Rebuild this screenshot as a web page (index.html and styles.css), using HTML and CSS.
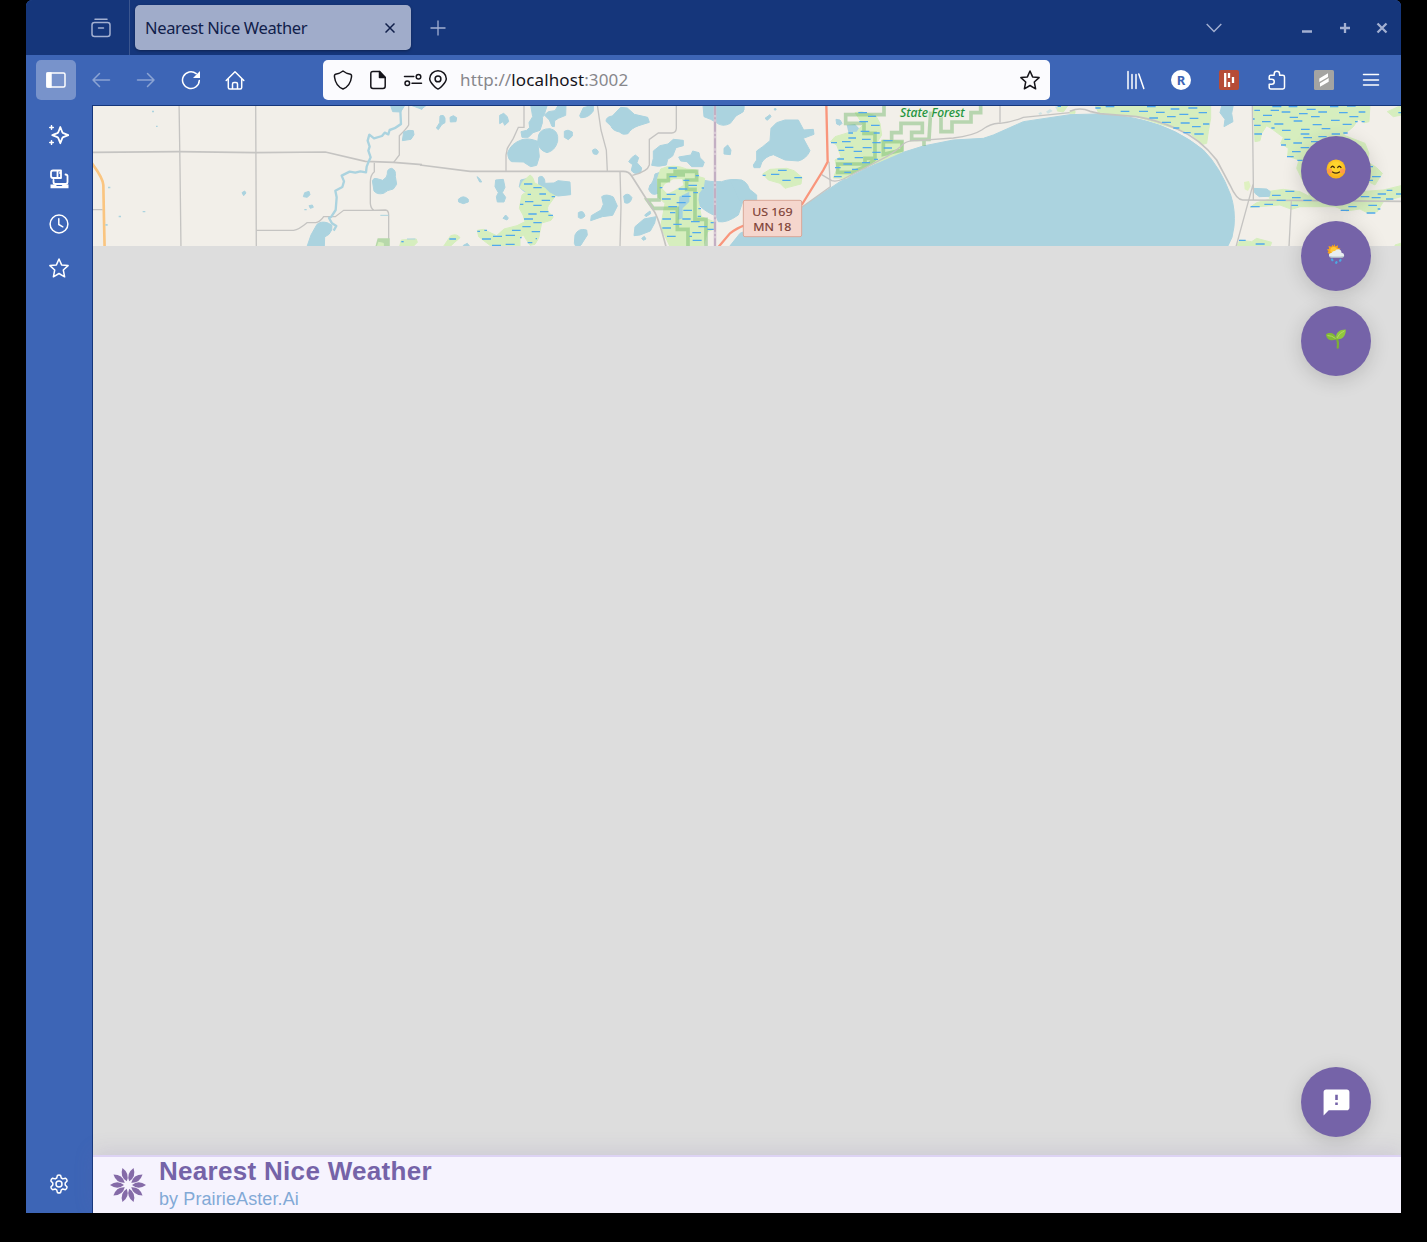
FILE: index.html
```html
<!DOCTYPE html>
<html lang="en">
<head>
<meta charset="utf-8">
<title>Nearest Nice Weather</title>
<link rel="stylesheet" href="styles.css">
</head>
<body>
<div class="window">
  <header class="titlebar">
    <div class="recent"><svg class="icon" viewBox="0 0 20 20"><path d="M4 1.2h12"/><rect x="1" y="4.5" width="18" height="14" rx="2.5"/><path d="M7.5 10h5"/></svg></div>
    <div class="tab"><span class="tab-title">Nearest Nice Weather</span><svg class="tab-close" viewBox="0 0 10 10"><path d="M.5.5l9 9M9.500.5l-9 9"/></svg></div>
    <svg class="new-tab" viewBox="0 0 16 16"><path d="M8 .5v15M.5 8h15"/></svg>
    <div class="window-controls">
      <svg class="chevron" viewBox="0 0 16 10"><path d="M.7 1L8 8.500 15.300 1"/></svg>
      <svg class="control" viewBox="0 0 12 12"><path d="M1 9.500h10"/></svg>
      <svg class="control" viewBox="0 0 12 12"><path d="M1 6h10M6 1v10"/></svg>
      <svg class="control" viewBox="0 0 12 12"><path d="M1.500 1.500l9 9M10.500 1.500l-9 9"/></svg>
    </div>
  </header>

  <nav class="toolbar">
    <div class="tool tool-active"><svg class="icon" viewBox="0 0 20 20"><rect x="1" y="3" width="18" height="14" rx="1.500"/><path fill="currentColor" d="M1 3h4v14H1z"/></svg></div>
    <div class="tool dim"><svg class="icon" viewBox="0 0 20 20"><path d="M18.500 10H2M8.500 3.500L2 10l6.500 6.500"/></svg></div>
    <div class="tool dim"><svg class="icon" viewBox="0 0 20 20"><path d="M1.500 10H18M11.500 3.500L18 10l-6.500 6.500"/></svg></div>
    <div class="tool"><svg class="icon" viewBox="0 0 20 20"><path d="M18.300 10.500A8.400 8.400 0 1 1 15.200 3.600"/><path fill="currentColor" stroke="none" d="M19 1v7h-7z"/></svg></div>
    <div class="tool home"><svg class="icon" viewBox="0 0 20 20"><path d="M1.200 10.500L10 1.800l8.800 8.700M3.300 8.800v8.700q0 1.500 1.500 1.500h10.400q1.500 0 1.500-1.500V8.800M7.500 19v-5q0-1.500 1.500-1.500h2q1.500 0 1.500 1.500v5"/></svg></div>
    <div class="urlbar">
      <svg class="icon" viewBox="0 0 20 20"><path d="M10 1C7.800 2.800 4.800 3.800 2.500 4.200 1.300 4.500 1.300 5.500 1.500 7c.7 5.500 4 10.200 8.500 12 4.500-1.800 7.800-6.500 8.500-12 .2-1.500.2-2.500-1-2.800C15.200 3.800 12.200 2.800 10 1z"/></svg>
      <svg class="icon doc" viewBox="0 0 20 20"><path d="M11.500 1.500H5Q2.800 1.500 2.800 3.700v12.600q0 2.200 2.200 2.200h10q2.200 0 2.200-2.200V7.500z"/><path fill="currentColor" d="M11.500 1.500v6h5.700z"/></svg>
      <svg class="icon perms" viewBox="0 0 20 20"><path d="M1.500 6.500h9.300M9 13.300h9.500"/><circle cx="15.500" cy="6.800" r="2.300"/><circle cx="4.300" cy="13.200" r="2.300"/></svg>
      <svg class="icon pin" viewBox="0 0 20 20"><path d="M10 19c-.9 0-8.300-6-8.300-10.200a8.300 8 0 0 1 16.600 0C18.300 13 10.900 19 10 19z"/><circle cx="10" cy="8.900" r="2.900"/></svg>
      <span class="url">http://<b>localhost</b>:3002</span>
      <svg class="icon star" viewBox="0 0 20 20"><path d="M10 1l2.600 5.900 6.500.7-4.800 4.400 1.300 6.800L10 15.500l-5.600 3.300L5.700 12 .9 7.600l6.500-.7z"/></svg>
    </div>
    <div class="tools-right">
      <div class="tool"><svg class="icon" viewBox="0 0 20 20"><path d="M2 1.500v17.200M6 4.500v14M10 4.500v14M12.800 4l5 14.500"/></svg></div>
      <div class="tool"><span class="avatar">R</span></div>
      <div class="tool wide"><svg class="icon" viewBox="0 0 20 20"><rect fill="#b64b36" stroke="none" width="20" height="20" rx="2"/><path stroke="#fff" stroke-width="2.300" stroke-linecap="butt" d="M6.200 3v14M10 3v5M10 12v5M14 7v6"/></svg></div>
      <div class="tool wide"><svg class="icon" viewBox="0 0 20 20"><path d="M2.200 9V6.700q0-1.500 1.500-1.500h3.500V4a2.700 2.700 0 0 1 5.400 0v1.200h3.200q1.700 0 1.700 1.700v10.400q0 1.700-1.700 1.700H3.900q-1.700 0-1.700-1.700v-3h2.500a2.500 2.500 0 0 0 0-5.100H2.200"/></svg></div>
      <div class="tool wide"><svg class="icon" viewBox="0 0 20 20"><rect fill="#a4a4a2" stroke="none" width="20" height="20" rx="1.500"/><path fill="#fff" stroke="none" d="M5.300 8.500L14 3.300v3.600L5.300 12zM6 13.300l8.700-5.200v3.600L6 16.800z"/></svg></div>
      <div class="tool menu"><svg class="icon" viewBox="0 0 20 20"><path d="M2.500 4.500h15M2.500 10h15M2.500 15h15"/></svg></div>
    </div>
  </nav>

  <div class="body">
    <aside class="sidebar">
      <svg class="icon" viewBox="0 0 20 20"><path stroke-width="1.800" d="M11.300 2l2 5.200q.3.700 1 1l5 2-5 2q-.7.300-1 1l-2 5-2-5q-.3-.7-1-1l-5-2 5-2q.7-.3 1-1z"/><path d="M2.500.7v3.600M.7 2.500h3.600M2.500 15.700v3.600M.7 17.500h3.600"/></svg>
      <svg class="icon" viewBox="0 0 20 20"><path stroke-width="1.800" d="M4 1.500h8V9H4q-2 0-2-2V3.500q0-2 2-2zM8.500 2v7M11 4h1M4.500 11v2q0 2 2 2h10q2 0 2-2V7q0-1.500-2-1.500"/><path fill="currentColor" stroke="none" d="M1.500 15.500h5l1.500 1.500h4.500l1.500-1.500h5.500v3.700h-18z"/></svg>
      <svg class="icon" viewBox="0 0 20 20"><circle cx="10" cy="10" r="8.900"/><path d="M9.800 4.800v5.700l4 2.300"/></svg>
      <svg class="icon" viewBox="0 0 20 20"><path d="M10 1l2.600 5.900 6.500.7-4.800 4.400 1.300 6.800L10 15.500l-5.600 3.300L5.700 12 .9 7.600l6.500-.7z"/></svg>
      <svg class="icon settings" viewBox="0 0 20 20"><path d="M8.400 1.500q1.600-1 3.200 0l.7 2.500 1.500.9 2.600-.7q1.500.8 1.700 2.700l-1.900 2v2l1.900 2.100q-.2 1.900-1.700 2.700l-2.600-.7-1.500.9-.7 2.600q-1.600 1-3.200 0l-.7-2.600-1.500-.9-2.600.7q-1.500-.8-1.700-2.700l1.900-2.100v-2l-1.900-2q.2-1.900 1.700-2.700l2.600.7 1.500-.9z"/><circle cx="10" cy="10" r="3"/></svg>
    </aside>

    <main class="page">
      <svg class="map" viewBox="93 106 1308 140">
        <!-- farmland in the west, river and orange highway -->
        <g transform="translate(92 100) scale(.33333)">
          <g class="road"><path d="M0 157L260 155 490 158 700 156 820 184 905 187 990 194" stroke-width="5"/><path d="M261 0L264 200 267 450M491 0L493 450" stroke-width="4"/><path d="M0 329H32M493 391H605Q620 389 645 368H672Q685 365 695 350H730L755 331H838L880 330Q890 331 890 345V450M847 188V215Q835 225 835 245V310Q836 325 845 330M950 0V75Q945 85 922 107V165L905 187"/></g>
          <path class="highway-yellow" d="M0 190Q33 235 34 255L36 360 38 450"/>
          <path class="river" d="M925 30L927 72Q910 86 893 90L889 103 878 98 870 108 846 115 832 104 827 122 833 140 829 152 836 172 829 187 824 200 822 217 805 214 790 218 773 215 749 227 756 244 751 261 730 272 734 292 731 330 718 350 711 354 720 370 733 378 725 392"/>
          <g class="water"><path d="M895 15L902 35 926 36 939 15zM955 15L990 28V15zM931 122L935 96 951 91 964 92 966 104 957 118zM841 242Q845 232 855 236L872 241Q886 232 886 222 884 207 899 205 913 210 910 229L914 253 904 267Q885 270 875 280 855 285 846 273zM645 440L657 405 675 373Q688 362 708 369L720 376 719 390 711 403 698 411 697 440zM634 290L638 278 651 274 654 284 646 292zM651 317L661 315 664 322 655 325zM450 278L458 273 462 279 455 287z"/></g>
          <path fill="#abd3df" d="M48 260h7v5h-7zM80 347h7v5h-7zM152 333h8v4h-8zM40 372h7v5h-7zM180 32h6v5h-6zM192 77h5v4h-5zM637 327h7v4h-7z"/>
          <path fill="#b7d8aa" d="M857 415h36v25h-43z"/><path class="marsh" d="M928 420l45-3 3 10-15 15h-39zM860 427l14 3v10h-18z"/><path stroke="#abd3df" stroke-width="3" d="M865 346h25M945 417h25"/><path class="dash" d="M928 425h7"/>
        </g>

        <!-- central lakes and the county line -->
        <g transform="translate(420 100) scale(.33333)">
          <g class="water"><path d="M60 48Q72 42 75 55V68L65 74 55 89 49 84 59 68zM90 52L100 47 110 53 108 65 91 66zM239 46L251 40 262 50 266 65 254 76 249 65 239 71zM332 15H382L373 43Q365 50 367 69L360 91 339 98 325 112 306 112 303 95 320 91 329 82 327 68 338 50zM385 35L405 32 415 15H438L437 46 415 55 404 62 403 80 396 79 388 60 373 45zM263 158Q273 130 306 119 326 113 353 124L358 170 350 196 332 200 310 186 275 185Q264 180 263 158zM356 105Q362 86 390 86 417 91 413 124 405 153 381 158 356 151 353 125zM433 94Q443 86 457 96V108L445 119 433 112zM479 47L490 23 520 15V33Q505 55 482 53zM558 64Q558 50 577 48L602 22 622 24 643 43 683 52 688 67 656 77Q633 85 624 101 608 107 598 96 576 91 573 78zM517 151Q528 141 535 155 534 168 520 161zM849 15H972L970 35 948 48 931 70Q906 83 888 67L872 58 852 50zM700 153L720 137 744 132 760 118 790 121V137L768 143 758 168 743 178 739 195Q715 202 695 196L700 175zM776 171L813 165 818 153 837 158 840 173 853 186 848 200 815 200 801 185 782 183zM626 185L635 173 646 165 656 173 651 188 665 204 662 218Q640 225 634 210L638 194zM912 145L923 135 933 150 931 164 912 162zM171 230l8 6 6 10-6 0zM227 240L250 238 255 262 247 278 257 292 252 306 232 306 229 290 235 278 225 260zM115 298Q130 283 145 298V306L130 311 116 306zM249 355L257 345 265 354 261 360zM302 240L320 236 330 252 336 282 309 272 298 260zM356 232Q368 223 374 240L375 250 402 249 414 242 450 246 452 284 415 288 395 284 355 281zM545 290Q558 280 580 291L592 318 578 346 547 350 512 362 514 347 543 330 550 313zM475 338Q490 328 495 348 485 360 475 352zM611 288Q624 275 636 293 630 315 614 308zM465 405Q475 383 500 390L502 405 483 435 470 445 463 430zM645 380L672 357 708 350 704 369 691 393 660 405 642 407zM674 345L690 333 692 341 678 350zM665 415l8-6 5 8-8 4zM690 255Q700 248 705 222L720 217 724 240 714 280Q695 290 686 268zM830 270L845 240Q870 246 905 245 930 235 965 240 988 250 990 280V290L970 300 955 345Q920 370 895 365L888 348Q855 335 837 315zM930 440L955 410 1000 390V450zM0 15H20L5 27 0 25zM130 436L142 430 150 440H130z"/></g>
          <g class="marsh"><path d="M308 245L330 225Q340 230 343 248L375 265 388 278 406 288 391 309Q377 323 386 337L400 350 393 361 365 369 359 398Q360 413 345 433L330 436 310 405 300 413 300 440H215L176 410 172 391 190 388 230 407 252 387 291 377 315 365 309 345 298 325 306 285 319 275 300 263zM70 440L92 407Q112 400 120 413L103 428 90 440zM712 238L722 207Q760 190 800 207L830 210 837 230 854 235 850 262 836 280 834 300 844 350 882 365 887 385 862 395 850 440H750L722 380 735 310 715 292z"/></g>
          <path fill="#f2efe9" d="M726 265L735 252 760 238 786 237 790 255 760 273 742 281z"/>
          <path fill="#8fc6ec" opacity=".7" d="M778 290l30-15v30l-20 20v30l-15 5z"/>
          <path class="forest" d="M795 225H745V242H717V300H682L700 325H772V388H804V440M760 214H830V240H800V268H825V358H858V440"/>
          <g class="road"><path d="M0 195L150 214H610Q627 214 635 228L700 330Q715 350 738 440" stroke-width="5"/><path d="M532 15L543 90 559 150 562 214" stroke-width="4"/><path d="M312 15V82H295L280 115 262 145 258 165V214M769 15V85Q768 98 755 99H715L688 118V195Q683 215 637 226M600 214L603 320 600 440"/></g>
          <path class="dash" d="M312 252h25M340 263h25M323 283h10M358 282h20M395 290h10M315 305h25M365 301h25M300 313h10M340 316h25M325 342h25M360 335h25M312 357h27M385 346h14M340 368h25M307 380h25M276 391h26M335 395h25M172 394h8M193 391h8M186 417h27M219 409h27M257 406h28M300 413h5M347 416h4M216 436h27M257 433h27M323 428h14M88 417h20M745 204h26M748 230h22M790 241h18M805 256h26M827 227h10M719 263h8M776 267h26M845 264h7M740 283h27M786 289h26M726 297h26M770 308h27M745 320h26M790 331h26M750 338h16M727 357h26M787 357h25M760 373h25M813 365h26M727 384h26M835 380h26M862 388h24M817 398h26M741 409h26M808 409h8M818 421h27M872 368h11M820 278h14M835 326h8M833 349h10"/>
          <path class="county" d="M885 15V440"/><path class="county-dash" d="M885 15V440"/>
        </g>

        <!-- big lake with state forest on its shore -->
        <g transform="translate(740 100) scale(.33333)">
          <g class="water"><path d="M40 195L50 180V153L68 140 90 122 93 85 110 68 135 60H175L191 90 220 88 222 103 190 115 210 152Q200 176 175 183L135 180 100 164Q75 170 65 188L60 203 42 203zM75 55L90 44 93 50 82 61zM0 15H12V30L0 42zM103 26h5v4h-5zM-30 240Q15 240 25 265L50 285V305H0zM288 58L300 60 306 70 300 76 290 72z"/><path d="M-40 450L0 400 185 322 300 245 400 195 480 160 550 138 640 120 730 115 760 105 850 65 930 53 990 44 1070 42Q1150 45 1210 61 1310 85 1390 150 1440 200 1472 285 1487 330 1482 380L1476 412 1458 450z"/></g>
          <path fill="#cfe3e4" d="M918 35l12-8 8 6-14 8zM895 40l8-4 4 6-8 3zM945 20l15-4 5 8-15 5z"/>
          <path class="marsh" d="M345 38L365 35 408 48 420 70 425 105 410 130 430 120 489 124 488 155 430 180 345 215 320 235 280 234 292 205 285 180 303 170 290 135 272 125 285 110 325 98 350 92 370 75zM68 222L90 208 140 205 162 212 186 232 183 252 145 262 135 265 120 250 85 240zM955 15H985L970 36 952 33z"/>
          <path fill="#abd3df" d="M320 75L345 72 357 85 350 95 325 97z"/>
          <path class="forest" d="M432 15V44H317V70H372V100H405V175H375V192H293V217H335L375 200 405 178M430 125H486V150L430 163zM455 124V98H483V70H547V97H515V118H567L572 35M603 50V95H636V66H693V38H722V15M552 120V138"/>
          <g class="road"><path d="M245 224L275 242Q290 246 310 237L440 170Q475 148 490 132 505 120 530 122L640 114Q700 107 725 90 755 68 780 70 815 67 850 52L990 38"/><path d="M267 185L271 260 185 322M780 15V68"/></g>
          <path class="highway-red" d="M259 15L263 185 250 210 185 315M-64 440L-30 400Q-5 382 12 377"/>
          <path class="dash" d="M355 38h26M384 49h24M358 65h26M393 76h26M362 94h26M325 99h14M401 99h18M325 114h23M366 118h26M273 128h18M306 125h26M397 128h25M315 142h25M368 143h27M296 151h17M341 154h25M397 157h25M292 177h20M344 173h25M310 192h26M366 188h24M285 203h17M336 208h18M313 217h20M282 230h23M431 144h25M430 122h28M402 178h12M114 211h26M93 223h25M68 226h9M163 233h23M127 241h25M953 19h10"/>
          <text class="map-label" x="577" y="51" text-anchor="middle" textLength="194" lengthAdjust="spacingAndGlyphs">State Forest</text>
          <rect x="10" y="301" width="175" height="109" rx="5" fill="#f5d6cd" stroke="#daa798" stroke-width="3"/>
          <text class="shield" x="97" y="348" text-anchor="middle" textLength="121" lengthAdjust="spacingAndGlyphs">US 169</text><text class="shield" x="97" y="393" text-anchor="middle" textLength="114" lengthAdjust="spacingAndGlyphs">MN 18</text>
        </g>

        <!-- eastern marshes -->
        <g transform="translate(1070 100) scale(.33333)">
          <path class="marsh" d="M75 15H422V55L415 95 410 130 398 133 360 100 270 72 200 50 85 37zM550 15H900L897 65 883 68 865 58 850 80 820 105 885 130 897 160 892 185 920 203 937 220 915 255 885 240 870 275 940 270 993 257V290L940 305 922 335 895 340 870 327 830 333 795 320H690L665 328 630 315 540 322 560 308 600 297 590 275 640 268 690 275 720 290 690 225 680 205 687 180 653 168 655 145 632 130 640 112 610 90 590 77 575 100 570 122 555 125zM952 35L985 20H995V45L970 50zM500 440L510 420 545 425 560 415 605 427 600 440zM975 435l20-6v12h-20zM0 32h15v8H0z"/>
          <path fill="#dff1c1" d="M522 246l15-3 5 15-8 15-10-5z"/>
          <path class="water" d="M456 15H490L485 40 489 65 462 80 465 58 450 38zM550 265L590 267 601 275 598 289 568 290 555 280z"/>
          <g class="road"><path d="M0 34Q30 20 60 34L90 41 200 50Q260 60 320 86 390 115 440 180L480 255Q500 300 518 300L993 304" stroke-width="5"/><path d="M547 15L550 250 498 440M550 250V300M664 304L657 440"/></g>
          <path class="dash" d="M76 24h16M107 20h26M231 20h26M152 34h26M207 34h27M302 27h26M355 24h27M258 37h26M328 43h27M238 54h26M291 50h26M386 38h25M359 55h26M276 67h27M332 69h27M399 72h19M366 80h26M310 84h18M340 98h22M373 102h28M553 31h17M607 20h27M602 31h25M656 20h26M710 28h27M780 20h25M831 18h26M635 36h26M579 46h27M687 41h26M745 36h26M807 38h26M866 36h20M838 50h27M723 50h26M659 52h25M576 65h26M783 61h26M613 72h27M671 63h26M728 74h27M818 73h27M552 76h20M855 65h8M875 65h9M553 102h23M604 84h10M636 91h26M693 88h26M755 86h26M692 102h26M785 102h25M820 99h13M745 110h25M700 113h26M643 118h18M670 129h26M633 135h15M723 125h27M666 155h26M692 143h26M651 170h20M682 181h16M897 200h12M906 230h26M896 241h13M646 274h27M606 286h26M666 293h26M950 271h17M872 290h26M923 282h25M905 293h27M948 297h22M978 282h15M542 320h27M583 313h26M664 316h20M895 316h26M835 320h25M812 331h25M890 339h26M923 327h8M507 421h20M557 432h27M985 38h8M549 57h5M620 301h27M700 301h25"/>
        </g>
      </svg>

      <div class="fabs">
        <div class="fab"><svg class="emoji" viewBox="0 0 20 20"><defs><radialGradient id="face" cx=".5" cy=".4"><stop offset=".5" stop-color="#ffd52d"/><stop offset="1" stop-color="#f9b31b"/></radialGradient></defs><circle cx="10" cy="10" r="9.500" fill="url(#face)"/><circle cx="3.700" cy="12" r="2.500" fill="#ff8b5c" opacity=".7"/><circle cx="16.300" cy="12" r="2.500" fill="#ff8b5c" opacity=".7"/><path fill="none" stroke="#422b0d" stroke-width="1.300" stroke-linecap="round" d="M5 8.500q1.500-2.500 3.300 0M11.700 8.500q1.500-2.500 3.300 0M6.500 13q3.500 2.300 7 0"/></svg></div>
        <div class="fab"><svg class="emoji" viewBox="0 0 20 20"><path fill="#f8a51b" d="M8.500 0l.8 2.500L12 1.200l-.3 2.700 2.800.6L9 10l-5 1.500-.7-1.800L1.500 9l1-1.700L.8 5.500l2.400-.6L2.500 2l2.900.8L6.500.7l1.200 1.600z"/><circle cx="7.700" cy="6.300" r="3.300" fill="#ffc83b"/><path fill="#e8eef0" d="M5 13.200Q2.500 13 3 10.500q.8-2 2.700-1.500Q6.500 6.500 9 7q1-2 3.400-1.700 3 .3 3.100 3.500 2.700.3 2.700 2.400-.1 2-2 2z"/><path fill="#b9c8ce" d="M3 12q7 1 15.200 0-.5 1.700-2 1.700H5q-1.700-.1-2-1.700z"/><path stroke="#4ca9e2" stroke-width="2.200" stroke-linecap="round" d="M6 15.500l.4.700M10.500 18.200l-.3.600M14.500 16l-.4.700"/></svg></div>
        <div class="fab"><svg class="emoji" viewBox="0 0 20 20"><path fill="none" stroke="#7daf35" stroke-width="2.200" stroke-linecap="round" d="M10.500 9.500Q12.500 12 11.700 18.700"/><path fill="#82b936" d="M0 5.300C3 3 9.500 3.500 10.700 10.300 5 12.700.5 11 0 5.300z"/><path fill="#91c83e" d="M19.800.4C14 .3 8.500 3.500 10.500 10 17 11 20 6 19.800.4z"/><path fill="none" stroke="#bddd68" stroke-width=".8" d="M1.500 6.500Q6 6.500 9.500 9.500M18.500 1.800Q13 4 11 9"/></svg></div>
      </div>
      <div class="fab feedback"><svg viewBox="0 0 24 24"><path fill="#fff" d="M20 2H4c-1.100 0-2 .9-2 2v18l4-4h14c1.100 0 2-.9 2-2V4c0-1.100-.9-2-2-2zm-7 12h-2v-2h2v2zm0-4h-2V6h2v4z"/></svg></div>

      <footer class="brand">
        <svg class="aster" viewBox="-18 -18 36 36"><defs><path id="petal" d="M4 0Q10.500-5.400 18 0 10.500 5.400 4 0z"/></defs><g fill="#856ba8"><use href="#petal"/><use href="#petal" transform="rotate(36)"/><use href="#petal" transform="rotate(72)"/><use href="#petal" transform="rotate(108)"/><use href="#petal" transform="rotate(144)"/><use href="#petal" transform="rotate(180)"/><use href="#petal" transform="rotate(216)"/><use href="#petal" transform="rotate(252)"/><use href="#petal" transform="rotate(288)"/><use href="#petal" transform="rotate(324)"/></g></svg>
        <div class="brand-text"><div class="brand-name">Nearest Nice Weather</div><div class="brand-by">by PrairieAster.Ai</div></div>
      </footer>
    </main>
  </div>
</div>
</body>
</html>
```
FILE: styles.css
```css
* { box-sizing: border-box; }
body { margin: 0; height: 1242px; background: #000; overflow: hidden; font-family: "Open Sans", "Noto Sans", sans-serif; }
svg { display: block; flex: none; }
.window { display: flex; flex-direction: column; width: 1375px; height: 1213px; margin: 0 26px; border-radius: 6px 6px 0 0; overflow: hidden; background: #3d65b6; }
.icon { width: 20px; height: 20px; fill: none; stroke: currentColor; stroke-width: 1.5; stroke-linejoin: round; stroke-linecap: round; }

.titlebar { display: flex; align-items: center; height: 55px; flex: none; background: #15367b; color: #a3b0d1; }
.recent { display: flex; align-items: center; justify-content: flex-end; width: 104px; height: 55px; padding-right: 18px; border-right: 1px solid #3b568f; }
.tab { display: flex; align-items: center; justify-content: space-between; width: 276px; height: 45px; margin-left: 5px; padding: 0 16px 0 10px; border-radius: 5px; background: #a0acca; color: #11204b; box-shadow: 0 1px 3px rgba(0, 0, 0, .35); }
.tab-title { font-family: "Noto Sans", sans-serif; font-size: 16.5px; line-height: 24px; letter-spacing: -.35px; white-space: nowrap; }
.tab-close { width: 10px; height: 10px; stroke: #11204b; stroke-width: 1.5; }
.new-tab { width: 16px; height: 16px; margin-left: 18.5px; stroke: currentColor; stroke-width: 1.3; }
.window-controls { display: flex; align-items: center; margin-left: auto; padding-right: 13px; gap: 25.5px; }
.chevron { width: 16px; height: 10px; margin-right: 54px; fill: none; stroke: currentColor; stroke-width: 1.4; }
.control { width: 12px; height: 12px; stroke: currentColor; stroke-width: 2.3; }

.toolbar { display: flex; align-items: center; height: 50px; flex: none; padding: 0 10px; gap: 5px; color: #fff; }
.tool { display: flex; align-items: center; justify-content: center; width: 40px; height: 40px; border-radius: 5px; }
.tool-active { background: #7893cb; }
.home { margin-left: -1px; }
.dim { color: #8ba3d3; }
.urlbar { display: flex; align-items: center; width: 727px; height: 40px; margin-left: 63px; padding: 0 10px; border-radius: 5px; background: #fbfbfe; color: #15141a; }
.doc { margin-left: 15px; }
.perms { margin-left: 15px; }
.pin { margin-left: 5px; }
.url { margin-left: 12px; font-family: "Noto Sans", sans-serif; font-size: 17px; line-height: 24px; letter-spacing: .12px; color: #87878c; }
.url b { font-weight: 400; color: #15141a; }
.star { margin-left: auto; }
.tools-right { display: flex; margin-left: auto; }
.tools-right .tool + .tool { margin-left: 5px; }
.tools-right .tool + .wide { width: 42px; margin-left: 5.5px; }
.tools-right .avatar { margin-right: 0; }
.tools-right .tool + .wide:nth-child(3) { margin-left: 7px; }
.tools-right .tool + .menu { margin-left: 6px; }
.avatar { width: 20px; height: 20px; border-radius: 50%; background: #fff; color: #3d65b6; font: bold 13px/20px "Noto Sans", sans-serif; text-align: center; }

.body { display: flex; flex: 1; min-height: 0; }
.sidebar { display: flex; flex-direction: column; align-items: center; gap: 24.4px; width: 67px; padding: 20px 1px 19px 0; border-right: 1px solid #15367b; color: #fff; }
.settings { margin-top: auto; }
.page { position: relative; display: flex; flex-direction: column; flex: 1; border-top: 1px solid #15367b; background: #ddd; }
.map { width: 1308px; height: 140px; background: #f2efe9; }
.road { fill: none; stroke: #c5c4c2; stroke-width: 4; }
.water { fill: #abd3df; stroke: #abd3df; stroke-width: 3; stroke-linejoin: round; }
.marsh { fill: #d6eebe; stroke: #d6eebe; stroke-width: 3; stroke-linejoin: round; }
.river { fill: none; stroke: #abd3df; stroke-width: 7; stroke-linejoin: round; }
.forest { fill: none; stroke: #6fb568; stroke-opacity: .45; stroke-width: 11; }
.dash { fill: none; stroke: #50a9ee; stroke-width: 4; }
.highway-yellow { fill: none; stroke: #fac580; stroke-width: 8; }
.highway-red { fill: none; stroke: #f9967c; stroke-width: 7; }
.county { fill: none; stroke: #d8c8d5; stroke-width: 8; }
.county-dash { fill: none; stroke: #c3afc3; stroke-width: 6; stroke-dasharray: 30 7 6 7; }
.map-label { font: italic 500 35px "Noto Sans", sans-serif; fill: #25933f; stroke: #e8f2df; stroke-width: 3; paint-order: stroke; }
.shield { font: 400 35px "Noto Sans", sans-serif; fill: #7d4034; stroke: #7d4034; stroke-width: .5; }

.fabs { position: absolute; top: 30px; right: 30px; display: flex; flex-direction: column; gap: 15px; }
.fab { display: flex; align-items: center; justify-content: center; width: 70px; height: 70px; border-radius: 50%; background: #7563a8; box-shadow: 0 4px 20px rgba(0, 0, 0, .16); }
.emoji { width: 20px; height: 20px; margin-bottom: 4px; }
.feedback { position: absolute; right: 30px; bottom: 76px; }
.feedback svg { width: 31px; height: 31px; }

.brand { display: flex; align-items: center; height: 58px; margin-top: auto; padding-left: 17px; gap: 13px; border-top: 2px solid #ddd3f4; background: #f6f3fe; box-shadow: 0 -4px 20px rgba(117, 99, 168, .16); font-family: "Liberation Sans", Arial, sans-serif; }
.aster { width: 36px; height: 36px; }
.brand-name { font-size: 26px; line-height: 28px; margin-top: -1px; font-weight: 700; letter-spacing: .3px; color: #7563a8; }
.brand-by { font-size: 18px; line-height: 28px; letter-spacing: .1px; color: #82a9d6; }
```
